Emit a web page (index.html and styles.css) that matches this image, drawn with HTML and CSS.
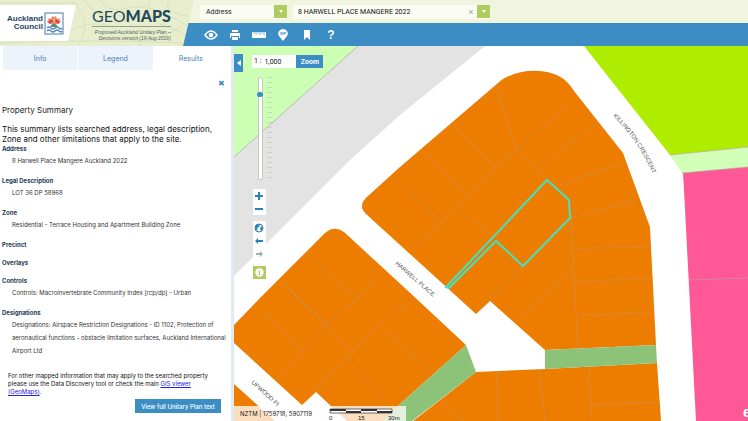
FILE: index.html
```html
<!DOCTYPE html>
<html lang="en">
<head>
<meta charset="utf-8">
<title>GeoMaps - Unitary Plan</title>
<link rel="stylesheet" href="styles.css">
</head>
<body>
<header class="header">
  <div class="brand">
    <svg class="contours" viewBox="0 0 194 46" aria-hidden="true"><path d="M70 0q25 18 8 46M84 0q14 20 30 16t26 30M100 0q8 14 28 8t60 18M72 30q30-14 50 4t60-8M150 0q-6 20 20 28t10 18M0 3h76M0 43q90-4 184 0M170 0q-10 12 18 16"/></svg>
    <div class="council">
      <span class="council-name">Auckland<br>Council</span>
      <svg class="emblem" viewBox="0 0 20 23" aria-hidden="true">
        <rect x="1" y="1" width="18" height="21" fill="#fff" stroke="#4a79a8"/>
        <path d="M3 10L5 6l2 1 1-3 2 1 2-1 1 3 2-1 2 4-3 2H6z" fill="#e98a79"/>
        <path d="M5 11q5-6 10 0" fill="none" stroke="#d33a38" stroke-width="2"/>
        <circle cx="10" cy="8" r="1.5" fill="#f3c14f"/>
        <path d="M7 13q3-3 6 0v2H7z" fill="#4d9670"/>
        <path d="M3 16q2-2 4 0t4 0 4 0 3 0M3 19q2-2 4 0t4 0 4 0 3 0" fill="none" stroke="#5187bd" stroke-width="1.3"/>
      </svg>
    </div>
    <div class="product">
      <h1 class="product-name">GEO<b>MAPS</b></h1>
      <p class="product-sub">Proposed Auckland Unitary Plan –<br>Decisions version (19 Aug 2016)</p>
    </div>
  </div>
  <form class="search">
    <div class="field field-type">
      <select class="control" aria-label="Search type"><option>Address</option></select>
      <span class="drop" aria-hidden="true"></span>
    </div>
    <div class="field field-query">
      <input class="control" type="text" aria-label="Search text" value="8 HARWELL PLACE MANGERE 2022">
      <button class="clear" type="button" aria-label="Clear">×</button>
      <button class="drop" type="button" aria-label="Show results"></button>
    </div>
  </form>
  <nav class="tools" aria-label="Tools">
    <button class="tool" aria-label="Layers"><svg viewBox="0 0 14 12"><path d="M1 6q6-8 12 0q-6 8-12 0z" fill="none" stroke="#fff" stroke-width="1.5"/><circle cx="7" cy="6" r="2.3" fill="#fff"/></svg></button>
    <button class="tool" aria-label="Print"><svg viewBox="0 0 14 12"><path d="M4 1h6v2H4zM3 4h8q1 0 1 1v4h-1V7H3v2H2V5q0-1 1-1zM4 8h6v3H4z" fill="#fff"/></svg></button>
    <button class="tool" aria-label="Measure"><svg viewBox="0 0 14 12"><path d="M0 3h14v6H0z" fill="#fff"/><path d="M2 3v2M4 3v3M6 3v2M8 3v3M10 3v2M12 3v3" stroke="#3b8dc3" stroke-width=".6"/></svg></button>
    <button class="tool" aria-label="District plan"><svg viewBox="0 0 14 12"><path d="M7 12L3 7Q1 4 4 1q3-2 6 0 3 3 1 6z" fill="#fff"/><text x="7" y="6" text-anchor="middle" class="pin-text">DP</text></svg></button>
    <button class="tool" aria-label="Bookmark"><svg viewBox="0 0 14 12"><path d="M4 1h6v10L7 8l-3 3z" fill="#fff"/></svg></button>
    <button class="tool tool-help" aria-label="Help">?</button>
  </nav>
</header>

<div class="workspace">
  <aside class="panel">
    <nav class="tabs">
      <button class="tab">Info</button>
      <button class="tab">Legend</button>
      <button class="tab tab-active">Results</button>
    </nav>
    <div class="results">
      <button class="close" aria-label="Close">✖</button>
      <h2 class="title">Property Summary</h2>
      <p class="intro">This summary lists searched address, legal description, Zone and other limitations that apply to the site.</p>
      <dl class="facts">
        <div><dt>Address</dt><dd>8 Harwell Place Mangere Auckland 2022</dd></div>
        <div><dt>Legal Description</dt><dd>LOT 36 DP 58968</dd></div>
        <div><dt>Zone</dt><dd>Residential - Terrace Housing and Apartment Building Zone</dd></div>
        <div><dt>Precinct</dt></div>
        <div><dt>Overlays</dt></div>
        <div><dt>Controls</dt><dd>Controls: Macroinvertebrate Community Index [rcp/dp] - Urban</dd></div>
        <div><dt>Designations</dt><dd>Designations: Airspace Restriction Designations - ID 1102, Protection of aeronautical functions - obstacle limitation surfaces, Auckland International Airport Ltd</dd></div>
      </dl>
      <p class="note">For other mapped information that may apply to the searched property please use the Data Discovery tool or check the main <a href="#">GIS viewer (GeoMaps)</a>.</p>
      <button class="plan">View full Unitary Plan text</button>
    </div>
  </aside>

  <main class="map">
    <svg class="map-canvas" viewBox="234 46 514 375" preserveAspectRatio="xMinYMin slice" role="img" aria-label="Zoning map">
      <rect x="234" y="46" width="514" height="375" fill="#fff"/>
      <path d="M234 46h124L234 157z" fill="#ccffb3"/>
      <path d="M358 46h127L400 115 350 160 234 276V157z" fill="#e3e3e3"/>
      <path d="M358 46L234 157" stroke="#b5bcb0"/>
      <path d="M584 46h164v101l-78 8z" fill="#aeec00"/>
      <path d="M670 155l78-8v20l-66 6z" fill="#d2ffb8"/>
      <path d="M683 173l65-6v254h-52L684 190z" fill="#ff5896"/>
      <path d="M670 155l78-8M682 173l66-6M689 280l59-2" stroke="#bc9c9c" stroke-width=".7" fill="none"/>
      <g fill="#ed7d00">
        <path d="M368 196L400 167 498 83C514 68 551 66 567 82Q571 86 574 91L623 153 650 227 656 345 545 350 490 301 476 314 366 214Q357 205 368 196z"/>
        <path d="M325 233Q334 225 344 232L407 290 466 345 400 404 386 421H347L316 392 302 405 234 343V325L260 298z"/>
        <path d="M234 384l41 37h-41z"/>
        <path d="M476 372l69-3 112-6 4 58H413z"/>
      </g>
      <path d="M545 350l111-5 1 18-112 6zM466 345l10 27-64 49h-29l17-17z" fill="#8dc379"/>
      <path class="lots" d="M497 89L517 149 547 180M573 101L517 149 495 168 470 195 440 224 418 245M454 126L495 167M422 151L470 197M396 178L443 223M462 209L489 233M540 165L596 125M560 185L622 163M572 218L636 200M571 216L578 349M575 249L649 246M574 282L651 278M577 316L653 312M569 273L520 318M523 266L489 300M497 372L498 421M540 370L545 421M589 367L592 421M591 405L660 402M265 312L302 352M278 378L328 324 358 298 380 275M290 290L355 354M305 255L358 298M282 282L328 324M312 393L350 355 380 325 410 302M346 358L386 400M385 330L430 370M440 400L463 421"/>
      <path d="M446 287L547 180 569 200 570 218 523 266 496 241 449 288z" class="parcel"/>
      <path id="killington" d="M613 116Q641 143 656 182" fill="none"/>
      <g class="streets">
        <text transform="translate(395 264) rotate(41)">HARWELL PLACE</text>
        <text transform="translate(251 383) rotate(42)">UPWOOD PL</text>
        <text><textPath href="#killington">KILLINGTON CRESCENT</textPath></text>
        <text x="743" y="417" class="credit">e</text>
      </g>
    </svg>

    <button class="collapse" aria-label="Collapse panel"></button>
    <form class="scale-form">
      <label class="ratio" for="scale">1 :</label>
      <input class="scale-input" id="scale" type="text" value="1,000">
      <button class="zoom" type="button">Zoom</button>
    </form>
    <div class="navigator">
      <div class="slider">
        <input class="range" type="range" min="0" max="100" value="85" aria-label="Zoom level">
        <span class="ticks"></span>
      </div>
      <div class="group">
        <button class="nav-button" aria-label="Zoom in"><svg viewBox="0 0 12 12"><path d="M6 2v8M2 6h8" stroke="#2b80b5" stroke-width="2"/></svg></button>
        <button class="nav-button" aria-label="Zoom out"><svg viewBox="0 0 12 12"><path d="M2 6h8" stroke="#2b80b5" stroke-width="2"/></svg></button>
      </div>
      <div class="group">
        <button class="nav-button" aria-label="Full extent"><svg viewBox="0 0 12 12"><circle cx="6" cy="6" r="4" fill="#fff" stroke="#2b80b5"/><path d="M3 3l4-1-1 3-2 1 1 3-3-2zM8 4l2 2-2 3-1-2z" fill="#2b80b5"/></svg></button>
        <button class="nav-button" aria-label="Previous extent"><svg viewBox="0 0 12 12"><path d="M2 6l3-3v2h5v2H5v2z" fill="#2b80b5"/></svg></button>
        <button class="nav-button" aria-label="Next extent"><svg viewBox="0 0 12 12"><path d="M10 6L7 3v2H3v2h4v2z" fill="#9ab0bd"/></svg></button>
      </div>
      <button class="info" aria-label="Information"><svg viewBox="0 0 14 14"><circle cx="7" cy="7" r="4.5" fill="#fff"/><path d="M7 4v1M6 6h1v3M6 9h2" fill="none" stroke="#9fbf4e"/></svg></button>
    </div>
    <div class="status">
      <span class="coords">NZTM | 1759718, 5907119</span>
      <svg class="scalebar" viewBox="0 0 76 14" aria-label="Scale 30 metres"><path d="M2 2h62v4H2z" fill="#fff" stroke="#444" stroke-width=".8"/><path d="M2 3h16M33 3h16M18 5h15M49 5h15" stroke="#333" stroke-width="2"/><text x="1" y="13">0</text><text x="30" y="13">15</text><text x="60" y="13">30m</text></svg>
    </div>
  </main>
</div>
</body>
</html>
```
FILE: styles.css
```css
* { box-sizing: border-box; }

body {
  margin: 0;
  min-height: 100vh;
  display: flex;
  flex-direction: column;
  background: #fff;
  color: #222;
  font-family: Inter, "Liberation Sans", Arial, sans-serif;
  font-size: 6px;
}

h1, h2, p, dl, dd { margin: 0; }
button, input, select { font: inherit; color: inherit; border: 0; padding: 0; margin: 0; background: none; border-radius: 0; }
button svg { display: block; }

/* Header */
.header {
  display: grid;
  grid-template-columns: 194px 1fr;
  grid-template-rows: 23px 23px;
}

.brand {
  grid-area: 1 / 1 / 3 / 2;
  z-index: 1;
  display: flex;
  align-items: center;
  gap: 16px;
  position: relative;
  background: #e7edcd;
  clip-path: polygon(0 0, 100% 0, 183px 100%, 0 100%);
}

.contours { position: absolute; inset: 0; fill: none; stroke: #d9e1bb; stroke-width: 1; }

.council {
  position: relative;
  display: flex;
  align-items: center;
  gap: 1px;
  width: 76px;
  height: 36px;
  padding-left: 5px;
  background: #fff;
  clip-path: polygon(0 0, 100% 0, 68px 100%, 0 100%);
}

.council-name {
  width: 38px;
  font-family: "Liberation Sans", Arial, sans-serif;
  font-size: 8px;
  line-height: 8px;
  font-weight: bold;
  text-align: right;
  color: #25466b;
}

.emblem { width: 20px; height: 23px; flex: none; }
.product { position: relative; color: #23485a; }

.product-name {
  font-family: Lato, sans-serif;
  font-size: 16px;
  line-height: 20px;
  font-weight: 400;
  border-bottom: 1px solid #8fa08d;
}

.product-name b { font-weight: 900; }

.product-sub {
  padding-top: 2px;
  font-family: "Liberation Sans", Arial, sans-serif;
  font-size: 5px;
  line-height: 6px;
  font-style: italic;
  text-align: right;
  color: #52645f;
}

.search {
  grid-area: 1 / 1 / 2 / 3;
  display: flex;
  align-items: center;
  gap: 6px;
  padding-left: 200px;
  background: #f1f4df;
}

.field { display: flex; align-items: center; background: #fbfcf3; height: 14px; }
.field-type { width: 87px; }
.field-query { width: 197px; }

.control {
  flex: 1;
  min-width: 0;
  height: 14px;
  appearance: none;
  padding-left: 6px;
  font-family: Roboto, Arial, sans-serif;
  font-size: 7px;
}

.field-query .control { padding-left: 5px; color: #111; }
.clear { width: 12px; font-size: 9px; line-height: 12px; color: #9cad78; }

.drop {
  width: 13px;
  height: 13px;
  display: grid;
  place-items: center;
  background: #b0cb5f;
}

.drop::before { content: ""; border: 2px solid transparent; border-top: 3px solid #fff; border-bottom: 0; }

.tools {
  grid-area: 2 / 1 / 3 / 3;
  display: flex;
  align-items: center;
  gap: 10px;
  padding-left: 204px;
  background: #3b8dc3;
}

.tool { width: 14px; height: 12px; color: #fff; }
.tool svg { width: 14px; height: 12px; }
.tool-help { font-family: "Liberation Sans", Arial, sans-serif; font-size: 12px; line-height: 12px; font-weight: bold; }
.pin-text { font-size: 4px; font-weight: bold; fill: #3b8dc3; }

/* Side panel */
.workspace { flex: 1; display: flex; }

.panel {
  width: 234px;
  flex: none;
  border-right: 3px solid #dfeaf4;
}

.tabs {
  display: grid;
  grid-template-columns: repeat(3, 1fr);
  gap: 1px;
  padding: 0 3px;
}

.tab { height: 24px; background: #edf3fa; color: #3f7fb5; font-size: 7px; }
.tab-active { background: #fff; }

.results {
  display: flex;
  flex-direction: column;
  padding: 7px 3px 0 2px;
}

.close { align-self: flex-end; width: 14px; height: 12px; color: #3b8dc3; font-size: 8px; }
.title { margin-top: 15px; font-size: 8px; line-height: 12px; font-weight: normal; }
.intro { margin-top: 8px; font-size: 8px; line-height: 10px; color: #111; }

.facts { display: flex; flex-direction: column; gap: 9px; }
.facts dt { font-weight: bold; line-height: 9px; color: #1d3a55; }
.facts dd { margin-top: 1px; padding-left: 10px; line-height: 13px; color: #333; }

.note { margin: 15px 20px 0 6px; line-height: 8px; color: #111; }
.note a { color: #22d; }

.plan {
  align-self: flex-end;
  margin: 3px 7px 0 0;
  width: 86px;
  height: 14px;
  background: #3b8dc3;
  color: #fff;
  font-weight: 500;
}

/* Map */
.map { position: relative; flex: 1; overflow: hidden; }
.map-canvas { position: absolute; inset: 0; width: 100%; height: 100%; }
.lots { fill: none; stroke: #d9873a; stroke-width: 1; }
.parcel { fill: none; stroke: #45e0c0; stroke-width: 2; }
.streets { font-family: "Liberation Sans", Arial, sans-serif; font-size: 6px; fill: #555; }
.credit { font-size: 14px; font-weight: bold; fill: #fff; }

.collapse {
  position: absolute;
  left: 0;
  top: 8px;
  width: 9px;
  height: 18px;
  display: grid;
  place-items: center;
  background: #3b8dc3;
}

.collapse::before { content: ""; border: 3px solid transparent; border-right: 4px solid #fff; border-left: 0; }

.scale-form { position: absolute; left: 18px; top: 9px; display: flex; height: 13px; font-family: Roboto, Arial, sans-serif; font-size: 7px; }
.ratio { padding: 0 3px 0 2px; background: #fff; line-height: 13px; color: #111; }
.scale-input { width: 32px; background: #fff; color: #111; }
.zoom { width: 27px; background: #3b8dc3; color: #fff; font-weight: bold; }

.navigator {
  position: absolute;
  left: 19px;
  top: 31px;
  display: flex;
  flex-direction: column;
  gap: 6px;
}

.slider { display: flex; gap: 4px; height: 104px; padding-left: 5px; margin-bottom: 2px; }

.range {
  appearance: none;
  writing-mode: vertical-lr;
  direction: rtl;
  width: 5px;
  height: 103px;
  border: 1px solid #c4c9c4;
  border-radius: 2px;
  background: #fff;
}

.range::-webkit-slider-thumb { appearance: none; width: 6px; height: 5px; border-radius: 3px; background: #3b8dc3; margin-left: -1px; }
.ticks { width: 5px; background: repeating-linear-gradient(#bbc5b6 0 1px, transparent 1px 5px); opacity: 0.6; }
.group { width: 13px; background: #fff; }
.nav-button { display: block; width: 13px; height: 13px; }
.nav-button svg { width: 12px; height: 12px; }
.info { width: 13px; height: 13px; background: #b0cb5f; }

.status {
  position: absolute;
  left: 0;
  bottom: 0;
  display: flex;
  align-items: center;
  gap: 16px;
  height: 15px;
  padding: 0 2px 0 6px;
  background: rgb(255 255 255 / 75%);
  color: #222;
}

.coords { white-space: nowrap; }
.scalebar { width: 76px; height: 14px; font-family: "Liberation Sans", Arial, sans-serif; fill: #222; }
```
